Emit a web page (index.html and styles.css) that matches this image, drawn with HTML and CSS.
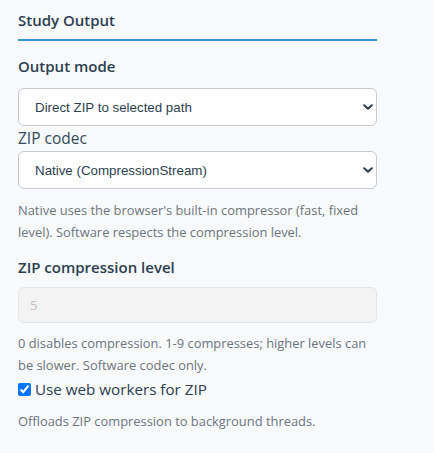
FILE: index.html
```html
<!DOCTYPE html>
<html lang="en">
<head>
<meta charset="utf-8">
<title>Study Output</title>
<link rel="stylesheet" href="styles.css">
</head>
<body>
<section class="panel">
  <h3 class="panel-title">Study Output</h3>

  <div class="field">
    <label class="field-heading" for="mode">Output mode</label>
    <div class="select-wrap">
      <select id="mode" class="select">
        <option>Direct ZIP to selected path</option>
      </select>
      <svg class="chev" viewBox="0 0 10 6" width="10" height="6"><path d="M1.2 1.2 L5 4.8 L8.8 1.2" fill="none" stroke="#2c3e50" stroke-width="2" stroke-linecap="round" stroke-linejoin="round"/></svg>
    </div>
    <label class="field-label" for="codec">ZIP codec</label>
    <div class="select-wrap">
      <select id="codec" class="select">
        <option>Native (CompressionStream)</option>
      </select>
      <svg class="chev" viewBox="0 0 10 6" width="10" height="6"><path d="M1.2 1.2 L5 4.8 L8.8 1.2" fill="none" stroke="#2c3e50" stroke-width="2" stroke-linecap="round" stroke-linejoin="round"/></svg>
    </div>
    <p class="help help-after-select">Native uses the browser's built-in compressor (fast, fixed level). Software respects the compression level.</p>
  </div>

  <div class="field field-level">
    <label class="field-heading" for="level">ZIP compression level</label>
    <input id="level" class="input" type="text" value="5" disabled>
    <p class="help help-after-input">0 disables compression. 1-9 compresses; higher levels can be slower. Software codec only.</p>
    <label class="check-row"><input type="checkbox" class="check" checked><span>Use web workers for ZIP</span></label>
    <p class="help help-after-check">Offloads ZIP compression to background threads.</p>
  </div>
</section>
</body>
</html>
```

FILE: styles.css
```css
html, body {
  margin: 0;
  padding: 0;
  background: #f8f9fb;
}
body {
  font-family: "Open Sans", "Noto Sans", sans-serif;
  color: #2c3e50;
}
.panel {
  width: 359px;
  padding: 10px 0 0 18px;
}
.panel-title {
  margin: 0;
  font-size: 15px;
  font-weight: 600;
  line-height: 20px;
  padding-bottom: 9px;
  border-bottom: 2px solid #3498db;
  color: #2c3e50;
}
.field {
  display: flex;
  flex-direction: column;
}
.field-heading {
  display: block;
  margin-top: 15px;
  font-size: 15px;
  font-weight: 600;
  line-height: 20px;
  margin-bottom: 12px;
}
.field-level .field-heading {
  margin-top: 14px;
  margin-bottom: 10px;
}
.field-label {
  display: block;
  font-size: 15.5px;
  line-height: 25px;
  color: #34495e;
}
.select-wrap {
  position: relative;
}
.select {
  -webkit-appearance: none;
  appearance: none;
  display: block;
  width: 100%;
  height: 38px;
  box-sizing: border-box;
  margin: 0;
  padding: 0 30px 0 16px;
  border: 1px solid #c8ccd0;
  border-radius: 6px;
  background: #fff;
  font-family: "Liberation Sans", Arial, sans-serif;
  font-size: 13.33px;
  color: #2c3e50;
}
.chev {
  position: absolute;
  right: 4px;
  top: 16px;
  pointer-events: none;
}
.input {
  display: block;
  width: 100%;
  height: 36px;
  box-sizing: border-box;
  margin: 0;
  padding: 0 11px;
  border: 1px solid #e3e5e8;
  border-radius: 6px;
  background: #f3f3f3;
  font-family: "Open Sans", sans-serif;
  font-size: 13.33px;
  color: #c4c4c4;
}
.help {
  margin: 0;
  font-size: 12.9px;
  line-height: 22px;
  color: #6c757d;
}
.help-after-select { margin-top: 10px; }
.help-after-input { margin-top: 9px; }
.check-row {
  display: flex;
  align-items: center;
  height: 24px;
  margin-top: 1px;
  font-size: 15.2px;
  color: #2c3e50;
}
.check {
  width: 13px;
  height: 13px;
  margin: 0 4px 0 0;
  accent-color: #0075ff;
}
.help-after-check { margin-top: 9px; }
```
